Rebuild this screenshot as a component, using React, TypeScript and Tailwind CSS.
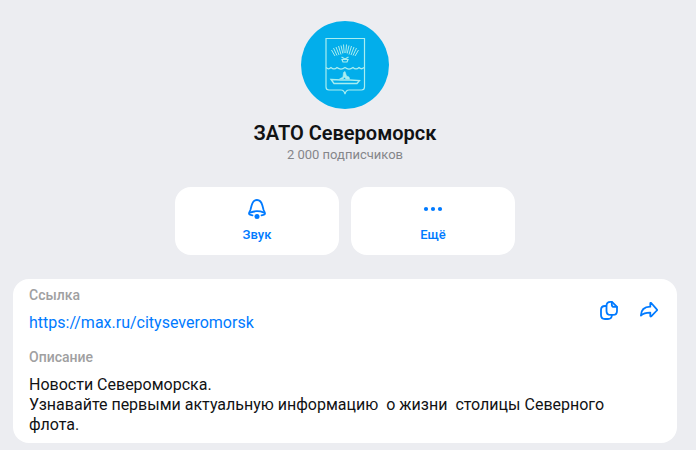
import type { ReactNode } from 'react'

const LINK = 'https://max.ru/cityseveromorsk'

const DESCRIPTION = `Новости Североморска.
Узнавайте первыми актуальную информацию  о жизни  столицы Северного флота.`

function Emblem() {
  return (
    <svg className="size-22" viewBox="0 0 88 88" fill="none" stroke="#a9edf0" role="img" aria-label="Герб Североморска">
      <circle cx="44" cy="44" r="44" fill="#02aeeb" stroke="none" />
      {/* Shield */}
      <path d="M25 17.500h38.500V66q0 3-3 3H48q-3 0-4 4q-1-4-4-4H28q-3 0-3-3z" strokeWidth="1.200" />
      {/* Northern lights */}
      <path
        d="M30.500 29l3.500 6M32.500 27l3.500 7.500M35 26l3 8M37.500 25l2.500 8.500M40 24.500l1.800 8M42.500 23.500l.7 8.500M45.500 23.500l-.7 8.500M48 24.500l-1.800 8M50.500 25l-2.500 8.500M53 26l-3 8M55.500 27l-3.500 7.500M57.500 29l-3.500 6"
        strokeWidth="1"
      />
      {/* Fox head */}
      <path d="M40.500 36l3.500 2l3.500-2M41 38.500h6l-1 2.500h-4z" strokeWidth="1.200" />
      {/* Waves */}
      <path d="M25 46.500q2.500 2.500 5 0q3 2.800 6 0q4 3.200 8 0q4 3.200 8 0q3 2.800 6 0q2.500 2.500 5 0" strokeWidth="1.200" />
      {/* Ship */}
      <path d="M30 58.500l10 .5h8.500l10 .5-2.500 3H33z" strokeWidth="1.300" />
      <path d="M38.500 58l3.500-2 .5-4.500 1.500-1 1.500 4.500 2.500 1 .5 2h-3.500l-1.500-2-1.500 2z" fill="#a9edf0" strokeWidth="0.600" />
    </svg>
  )
}

function BellIcon() {
  return (
    <svg className="size-6" viewBox="0 0 24 24" fill="none" stroke="currentColor" strokeWidth="1.800" strokeLinecap="round" strokeLinejoin="round">
      <path d="M7.500 18.300C5 17.800 4 17.300 4 16.400c0-1 .9-1.900 1.400-3.400L6.600 8.500C7.500 5 9.300 3 12 3s4.500 2 5.400 5.500l1.200 4.500c.5 1.500 1.400 2.400 1.400 3.400 0 .9-1 1.400-3.500 1.900" />
      <path d="M5 15.600c4-1.600 10-1.600 14 0" />
      <circle cx="12" cy="19.400" r="2.500" fill="currentColor" stroke="none" />
    </svg>
  )
}

function MoreIcon() {
  return (
    <svg className="size-6" viewBox="0 0 24 24" fill="currentColor">
      <circle cx="5" cy="12" r="2.100" />
      <circle cx="12" cy="12" r="2.100" />
      <circle cx="19" cy="12" r="2.100" />
    </svg>
  )
}

function CopyIcon() {
  return (
    <svg className="size-6" viewBox="0 0 24 24" fill="none" stroke="currentColor" strokeWidth="1.800" strokeLinecap="round" strokeLinejoin="round">
      <path d="M15 3.900h-1.500c-3 0-4 1-4 4v5c0 3 1 4 4 4h2.500c3 0 4-1 4-4V8.900z" />
      <path d="M14.800 4.100v2.600c0 1.500.7 2.200 2.200 2.200h2.800" />
      <path d="M9.300 8H8c-3 0-4 1-4 4v5c0 3 1 4 4 4h3c2.600 0 3.700-.9 3.900-3.700" />
    </svg>
  )
}

function ShareIcon() {
  return (
    <svg className="size-6" viewBox="0 0 24 24" fill="none" stroke="currentColor" strokeWidth="1.800" strokeLinecap="round" strokeLinejoin="round">
      <path d="M13.300 5.500v3.200C7.500 8.900 4 12 3.900 17.600c2.500-2.400 5.200-3.100 9.400-3v3.400c0 .5.500.7.900.4l5.600-5.900c.4-.4.400-.8 0-1.200l-5.600-6.300c-.4-.4-.9-.1-.9.500z" />
    </svg>
  )
}

function ActionButton({ icon, label }: { icon: ReactNode; label: string }) {
  return (
    <button type="button" className="flex w-41 flex-col items-center gap-1 rounded-2xl bg-white pt-2.5 pb-2.5 text-[13px] leading-5 font-medium text-[#007aff]">
      {icon}
      {label}
    </button>
  )
}

export default function App() {
  return (
    <div className="min-h-screen bg-[#ecedf1] pt-[21px] pr-[19px] pb-[7px] pl-[13px] font-[Roboto,sans-serif] text-[#111214]">
      <header className="flex flex-col items-center">
        <Emblem />
        <h1 className="mt-3 text-xl leading-6 font-semibold">ЗАТО Североморск</h1>
        <p className="mt-0.5 text-[13px] leading-4 text-[#85868a]">2 000 подписчиков</p>
      </header>

      <div className="mt-6 flex justify-center gap-3">
        <ActionButton icon={<BellIcon />} label="Звук" />
        <ActionButton icon={<MoreIcon />} label="Ещё" />
      </div>

      <main className="mt-6 flex flex-col gap-4 rounded-2xl bg-white px-4 py-2">
        <section className="flex items-center justify-between">
          <div>
            <h2 className="text-sm leading-4 font-medium text-[#a0a0a1]">Ссылка</h2>
            <a href={LINK} className="mt-2.5 block text-base leading-5 text-[#007aff]">{LINK}</a>
          </div>
          <div className="flex gap-4 text-[#007aff]">
            <button type="button" aria-label="Скопировать">
              <CopyIcon />
            </button>
            <button type="button" aria-label="Поделиться">
              <ShareIcon />
            </button>
          </div>
        </section>
        <section>
          <h2 className="text-sm leading-4 font-medium text-[#a0a0a1]">Описание</h2>
          <p className="mt-2.5 pr-4 text-base leading-5 whitespace-pre-wrap">{DESCRIPTION}</p>
        </section>
      </main>
    </div>
  )
}
